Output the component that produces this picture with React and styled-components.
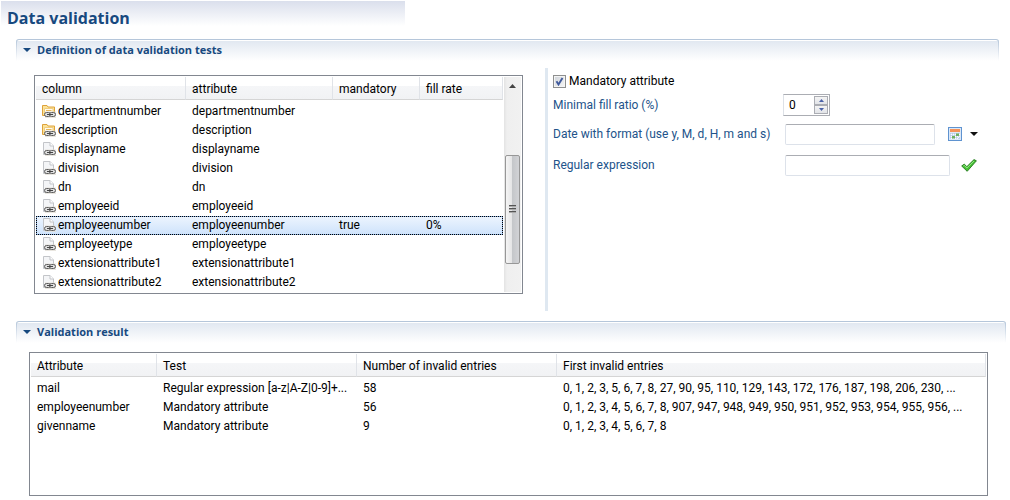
import React, { useState } from "react";
import styled, { createGlobalStyle } from "styled-components";

const Global = createGlobalStyle`
  *, *::before, *::after { box-sizing: border-box; }
  body {
    margin: 0;
    background: #fff;
    color: #000;
    font-family: Roboto, "Open Sans", sans-serif;
    font-size: 12px;
    line-height: 16px;
  }
  input, button { font: inherit; color: inherit; margin: 0; }
`;

const Page = styled.main`
  padding-bottom: 4px;
`;

const PageHeader = styled.header`
  height: 39px;
  padding: 8px 7px 0;
  background: linear-gradient(#dadfec, #fff) 1px 1px / 404px 25px no-repeat;
`;

const Title = styled.h1`
  margin: 0;
  font-family: "Open Sans", sans-serif;
  font-size: 16px;
  line-height: 20px;
  font-weight: 700;
  color: #17497f;
`;

const Section = styled.section`
  margin: 0 ${(p) => p.$right}px 0 16px;
`;

const SectionBar = styled.div`
  height: 22px;
  border-top: 1px solid #b5c6da;
  border-radius: 3px 3px 0 0;
  padding: 0 1px;
  background: linear-gradient(#b5c6da, #fff);
`;

const SectionToggle = styled.button`
  display: flex;
  align-items: center;
  gap: 6px;
  width: 100%;
  height: 21px;
  padding: 0 6px 1px;
  border: 0;
  border-radius: 2px 2px 0 0;
  background: linear-gradient(#fff 1px, #e1e8f1 1px, #fff);
  color: #17497f;
  text-align: left;
`;

const SectionName = styled.h2`
  margin: 0;
  font-family: "Open Sans", sans-serif;
  font-size: 11px;
  line-height: 16px;
  font-weight: 700;
`;

const Columns = styled.div`
  display: grid;
  grid-template-columns: 529fr 454fr;
  padding-top: 7px;
  height: 260px;
`;

const TableFrame = styled.div`
  display: flex;
  min-width: 0;
  border: 1px solid #828790;
  padding: 1px;
  background: #fff;
`;

const ColumnPicker = styled(TableFrame)`
  height: 219px;
  margin: 7px 22px 0 18px;
`;

const ResultFrame = styled(TableFrame)`
  height: 144px;
  margin: 9px 18px 0 13px;
`;

const Table = styled.table`
  flex: 1;
  min-width: 0;
  width: 100%;
  align-self: flex-start;
  table-layout: fixed;
  border-collapse: separate;
  border-spacing: 0;
`;

const Th = styled.th`
  width: ${(p) => (p.$width ? `${p.$width}px` : "auto")};
  height: 23px;
  padding: 2px 6px 0;
  border-right: 1px solid #e0e3e8;
  border-bottom: 1px solid #d5d5d5;
  background: linear-gradient(#fff 9px, #f5f6f8 9px, #f1f2f4);
  font-weight: 400;
  text-align: left;
`;

const Spacer = styled.tr`
  height: 2px;
`;

const Row = styled.tr`
  height: 19px;
  background: ${(p) => (p.$selected ? "linear-gradient(#eef5fe, #cde2fb)" : "none")};
  outline: ${(p) => (p.$selected ? "1px dotted #000" : "none")};
  outline-offset: -1px;
  box-shadow: ${(p) => (p.$selected ? "inset 0 0 0 1px #84acdd" : "none")};
`;

const Td = styled.td`
  padding: 0 6px 2px;
  overflow: hidden;
  white-space: nowrap;
  text-overflow: ellipsis;
`;

const IconLabel = styled.span`
  display: flex;
  align-items: center;
  gap: 2px;
  svg { flex: none; }
`;

const ScrollTrack = styled.div`
  flex: none;
  display: flex;
  flex-direction: column;
  align-items: center;
  width: 17px;
  margin-left: 1px;
  background: linear-gradient(90deg, #e3e3e3, #efefef 3px, #f1f1f1);
`;

const ScrollArrow = styled.div`
  display: flex;
  align-items: center;
  justify-content: center;
  height: 17px;
`;

const ScrollThumb = styled.div`
  display: flex;
  align-items: center;
  justify-content: center;
  width: 15px;
  height: 109px;
  margin-top: 61px;
  border: 1px solid #979797;
  border-radius: 2px;
  background: linear-gradient(90deg, #f5f5f5, #e3e3e4 50%, #c5c7ca 50%, #d2d3d6);
`;

const Form = styled.form`
  height: 243px;
  padding: 5px 0 0 5px;
  border-left: 3px solid #dfe8f1;
  color: #22538a;
`;

const CheckRow = styled.label`
  display: flex;
  align-items: center;
  gap: 3px;
  height: 16px;
  color: #000;
`;

const CheckBox = styled.input`
  appearance: none;
  width: 13px;
  height: 13px;
  border: 1px solid #8e8f8f;
  background: linear-gradient(135deg, #cfd4da, #f6f6f6);
  box-shadow: inset 0 0 0 1px #f4f4f4;
  &:checked {
    background:
      url("data:image/svg+xml,%3Csvg xmlns='http://www.w3.org/2000/svg' viewBox='0 0 11 11'%3E%3Cpath d='M2.5 5.2l2 3.2 4-6.4' fill='none' stroke='%23405a9c' stroke-width='1.9'/%3E%3C/svg%3E") center / 11px 11px no-repeat,
      linear-gradient(135deg, #cfd4da, #f6f6f6);
  }
`;

const Field = styled.div`
  display: grid;
  grid-template-columns: 232px 1fr;
  align-items: center;
  height: ${(p) => p.$height}px;
`;

const Controls = styled.div`
  display: flex;
  align-items: center;
`;

const TextBox = styled.input`
  width: ${(p) => p.$width}px;
  height: 21px;
  padding: 0 4px;
  border: 1px solid #dde2ea;
  border-top-color: #abadb3;
  border-radius: 2px;
  outline: 0;
  color: #000;
  background: #fff;
`;

const SpinBox = styled.div`
  display: flex;
  width: 47px;
  height: 22px;
  margin-left: -2px;
  padding: 1px;
  border: 1px solid #abadb3;
  border-left-color: #dde1e7;
`;

const SpinInput = styled.input`
  flex: 1;
  min-width: 0;
  padding: 0 4px;
  border: 0;
  outline: 0;
  background: none;
  color: #000;
`;

const SpinButtons = styled.div`
  display: grid;
  grid-template-rows: 1fr 1fr;
  width: 14px;
`;

const SpinButton = styled.button`
  display: flex;
  align-items: center;
  justify-content: center;
  padding: 0;
  border: 1px solid #abadb3;
  background: linear-gradient(#f4f4f4, #e2e4e8);
`;

const IconButton = styled.button`
  display: flex;
  align-items: center;
  gap: 8px;
  margin-left: ${(p) => p.$gap}px;
  padding: 0;
  border: 0;
  background: none;
`;

function Triangle({ up, width = 8, height = 4, color = "#111" }) {
  return (
    <svg width={width} height={height} viewBox="0 0 8 4" preserveAspectRatio="none" aria-hidden="true">
      <path d={up ? "M0 4h8L4 0z" : "M0 0h8L4 4z"} fill={color} />
    </svg>
  );
}

function LinkedItemIcon({ folder }) {
  return (
    <svg width="14" height="16" viewBox="0 0 14 16" aria-hidden="true">
      {folder ? (
        <>
          <path d="M.5 12.500v-10h4.500l1 1.500h6.500v8.500z" fill="#fbe39a" stroke="#dea23a" />
          <path d="M2.500 5.500h8.500v5h-8.500z" fill="#fffaf0" stroke="#f0cd7c" />
          <path d="M4 7.500h5.500" stroke="#e6b759" />
        </>
      ) : (
        <>
          <path d="M1.500 13.500v-12h6.500l3.500 3.500v8.500z" fill="#f4f5f7" stroke="#c3c5c9" />
          <path d="M8 1.500v3.500h3.500" fill="#fff" stroke="#c3c5c9" />
        </>
      )}
      <path d="M3 8.500h11v6.500H3z" fill="#e4e0d8" fillOpacity=".8" />
      <rect x="2.500" y="9.500" width="6" height="4" rx="2" fill="#dedede" stroke="#5c5c5c" />
      <rect x="7.500" y="9.500" width="6" height="4" rx="2" fill="#dedede" stroke="#5c5c5c" />
      <path d="M5 11.500h6" stroke="#444" />
    </svg>
  );
}

function CalendarIcon() {
  return (
    <svg width="14" height="14" viewBox="0 0 14 14" aria-hidden="true">
      <rect x=".5" y=".5" width="13" height="13" fill="#dbe8f8" stroke="#5f93d0" />
      <rect x="2" y="2" width="10" height="3" fill="#f5935a" />
      <path d="M2 6h10v4l-2 2H2z" fill="#fff" />
      <path d="M2 6.500h10M2 8.500h10M2 10.500h8M2.500 6v6M4.500 6v6M6.500 6v6M8.500 6v6M10.500 6v4" stroke="#a9c1e2" strokeWidth=".6" />
      <path d="M8 6.500h3v2.500H8zM4 9h3v2.500H4z" fill="#6fb063" />
      <path d="M12 9.500v2.500H9.500z" fill="#b6d0f0" />
    </svg>
  );
}

function ApplyIcon() {
  return (
    <svg width="16" height="13" viewBox="0 0 16 13" aria-hidden="true">
      <path d="M.7 7l2.600-1.900 2.500 2.600L13 .6l2.400 1.200L6.200 12.300z" fill="#46c234" stroke="#23761c" strokeWidth=".9" strokeLinejoin="round" />
      <path d="M2.300 7l1-.7L5.900 9 13 2" fill="none" stroke="#9be88b" strokeWidth=".9" />
    </svg>
  );
}

function GripIcon() {
  return (
    <svg width="7" height="9" viewBox="0 0 7 9" aria-hidden="true">
      <path d="M0 .5h7M0 3.500h7M0 6.500h7" stroke="#555" />
      <path d="M0 1.500h7M0 4.500h7M0 7.500h7" stroke="#aaa" />
    </svg>
  );
}

const attributes = [
  { name: "departmentnumber", folder: true },
  { name: "description", folder: true },
  { name: "displayname" },
  { name: "division" },
  { name: "dn" },
  { name: "employeeid" },
  { name: "employeenumber", mandatory: "true", fill: "0%" },
  { name: "employeetype" },
  { name: "extensionattribute1" },
  { name: "extensionattribute2" },
];

const results = [
  ["mail", "Regular expression [a-z|A-Z|0-9]+...", "58", "0, 1, 2, 3, 5, 6, 7, 8, 27, 90, 95, 110, 129, 143, 172, 176, 187, 198, 206, 230, ..."],
  ["employeenumber", "Mandatory attribute", "56", "0, 1, 2, 3, 4, 5, 6, 7, 8, 907, 947, 948, 949, 950, 951, 952, 953, 954, 955, 956, ..."],
  ["givenname", "Mandatory attribute", "9", "0, 1, 2, 3, 4, 5, 6, 7, 8"],
];

function SectionHead({ children }) {
  return (
    <SectionBar>
      <SectionToggle type="button" aria-expanded="true">
        <Triangle color="#17497f" />
        <SectionName>{children}</SectionName>
      </SectionToggle>
    </SectionBar>
  );
}

export default function App() {
  const [selected, setSelected] = useState("employeenumber");
  const [ratio, setRatio] = useState(0);
  return (
    <Page>
      <Global />
      <PageHeader>
        <Title>Data validation</Title>
      </PageHeader>

      <Section $right={11}>
        <SectionHead>Definition of data validation tests</SectionHead>
        <Columns>
          <ColumnPicker>
            <Table>
              <thead>
                <tr>
                  <Th $width={150}>column</Th>
                  <Th $width={147}>attribute</Th>
                  <Th $width={87}>mandatory</Th>
                  <Th>fill rate</Th>
                </tr>
              </thead>
              <tbody>
                <Spacer />
                {attributes.map((a) => (
                  <Row key={a.name} $selected={a.name === selected} onClick={() => setSelected(a.name)}>
                    <Td>
                      <IconLabel>
                        <LinkedItemIcon folder={a.folder} />
                        {a.name}
                      </IconLabel>
                    </Td>
                    <Td>{a.name}</Td>
                    <Td>{a.mandatory}</Td>
                    <Td>{a.fill}</Td>
                  </Row>
                ))}
              </tbody>
            </Table>
            <ScrollTrack>
              <ScrollArrow>
                <Triangle up width={7} color="#444" />
              </ScrollArrow>
              <ScrollThumb>
                <GripIcon />
              </ScrollThumb>
            </ScrollTrack>
          </ColumnPicker>

          <Form onSubmit={(e) => e.preventDefault()}>
            <CheckRow>
              <CheckBox type="checkbox" defaultChecked />
              Mandatory attribute
            </CheckRow>
            <Field $height={32}>
              <label htmlFor="ratio">Minimal fill ratio (%)</label>
              <SpinBox>
                <SpinInput id="ratio" value={ratio} onChange={(e) => setRatio(Number(e.target.value) || 0)} />
                <SpinButtons>
                  <SpinButton type="button" aria-label="Increase" onClick={() => setRatio(Math.min(100, ratio + 1))}>
                    <Triangle up width={5} height={3} color="#4a62a8" />
                  </SpinButton>
                  <SpinButton type="button" aria-label="Decrease" onClick={() => setRatio(Math.max(0, ratio - 1))}>
                    <Triangle width={5} height={3} color="#4a62a8" />
                  </SpinButton>
                </SpinButtons>
              </SpinBox>
            </Field>
            <Field $height={26}>
              <label htmlFor="date-format">Date with format (use y, M, d, H, m and s)</label>
              <Controls>
                <TextBox id="date-format" $width={150} />
                <IconButton type="button" aria-label="Choose a date format" $gap={13}>
                  <CalendarIcon />
                  <Triangle />
                </IconButton>
              </Controls>
            </Field>
            <Field $height={36}>
              <label htmlFor="regex">Regular expression</label>
              <Controls>
                <TextBox id="regex" $width={165} />
                <IconButton type="button" aria-label="Apply expression" $gap={11}>
                  <ApplyIcon />
                </IconButton>
              </Controls>
            </Field>
          </Form>
        </Columns>
      </Section>

      <Section $right={4}>
        <SectionHead>Validation result</SectionHead>
        <ResultFrame>
          <Table>
            <thead>
              <tr>
                <Th $width={126}>Attribute</Th>
                <Th $width={200}>Test</Th>
                <Th $width={200}>Number of invalid entries</Th>
                <Th>First invalid entries</Th>
              </tr>
            </thead>
            <tbody>
              <Spacer />
              {results.map((cells) => (
                <Row key={cells[0]}>
                  {cells.map((text, i) => (
                    <Td key={i}>{text}</Td>
                  ))}
                </Row>
              ))}
            </tbody>
          </Table>
        </ResultFrame>
      </Section>
    </Page>
  );
}
